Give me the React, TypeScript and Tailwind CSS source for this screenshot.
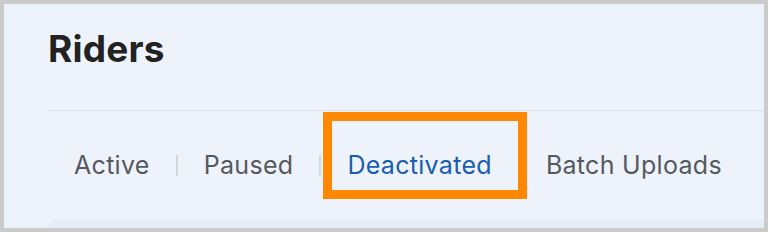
const tabs = ["Active", "Paused", "Deactivated", "Batch Uploads"]
const activeTab = "Deactivated"

export default function App() {
  return (
    <div className="flex h-[232px] w-[768px] flex-col overflow-hidden border-4 border-[#cbcbcb] bg-[#eef3fb] font-['Inter',sans-serif]">
      <div className="pl-[44px]">
        <h1 className="pt-[25px] text-[37px] font-bold leading-10 tracking-[0.2px] text-[#222222]">Riders</h1>
        <div className="mt-[41px] h-px bg-[#dde2ea]" />
        <div className="flex items-center">
          {tabs.map((tab, i) => {
            const active = tab === activeTab
            return (
              <div key={tab} className="flex items-center">
                <div className="relative px-[26px] py-[38px]">
                  <span className={`text-[25px] leading-8 tracking-[0.3px] ${active ? "text-[#1a5db0]" : "text-[#55595f]"}`}>{tab}</span>
                  {active && (
                    <div className="absolute left-[2px] top-[1px] h-[87px] w-[204px] border-[9px] border-[#ff8800]" />
                  )}
                </div>
                {i < tabs.length - 1 && <div className={`h-[21px] w-[2px] ${active ? "bg-transparent" : "bg-[#d3d7dc]"}`} />}
              </div>
            )
          })}
        </div>
        <div className="h-[20px] rounded-tl-lg bg-[#e7edf6]" />
      </div>
    </div>
  )
}
